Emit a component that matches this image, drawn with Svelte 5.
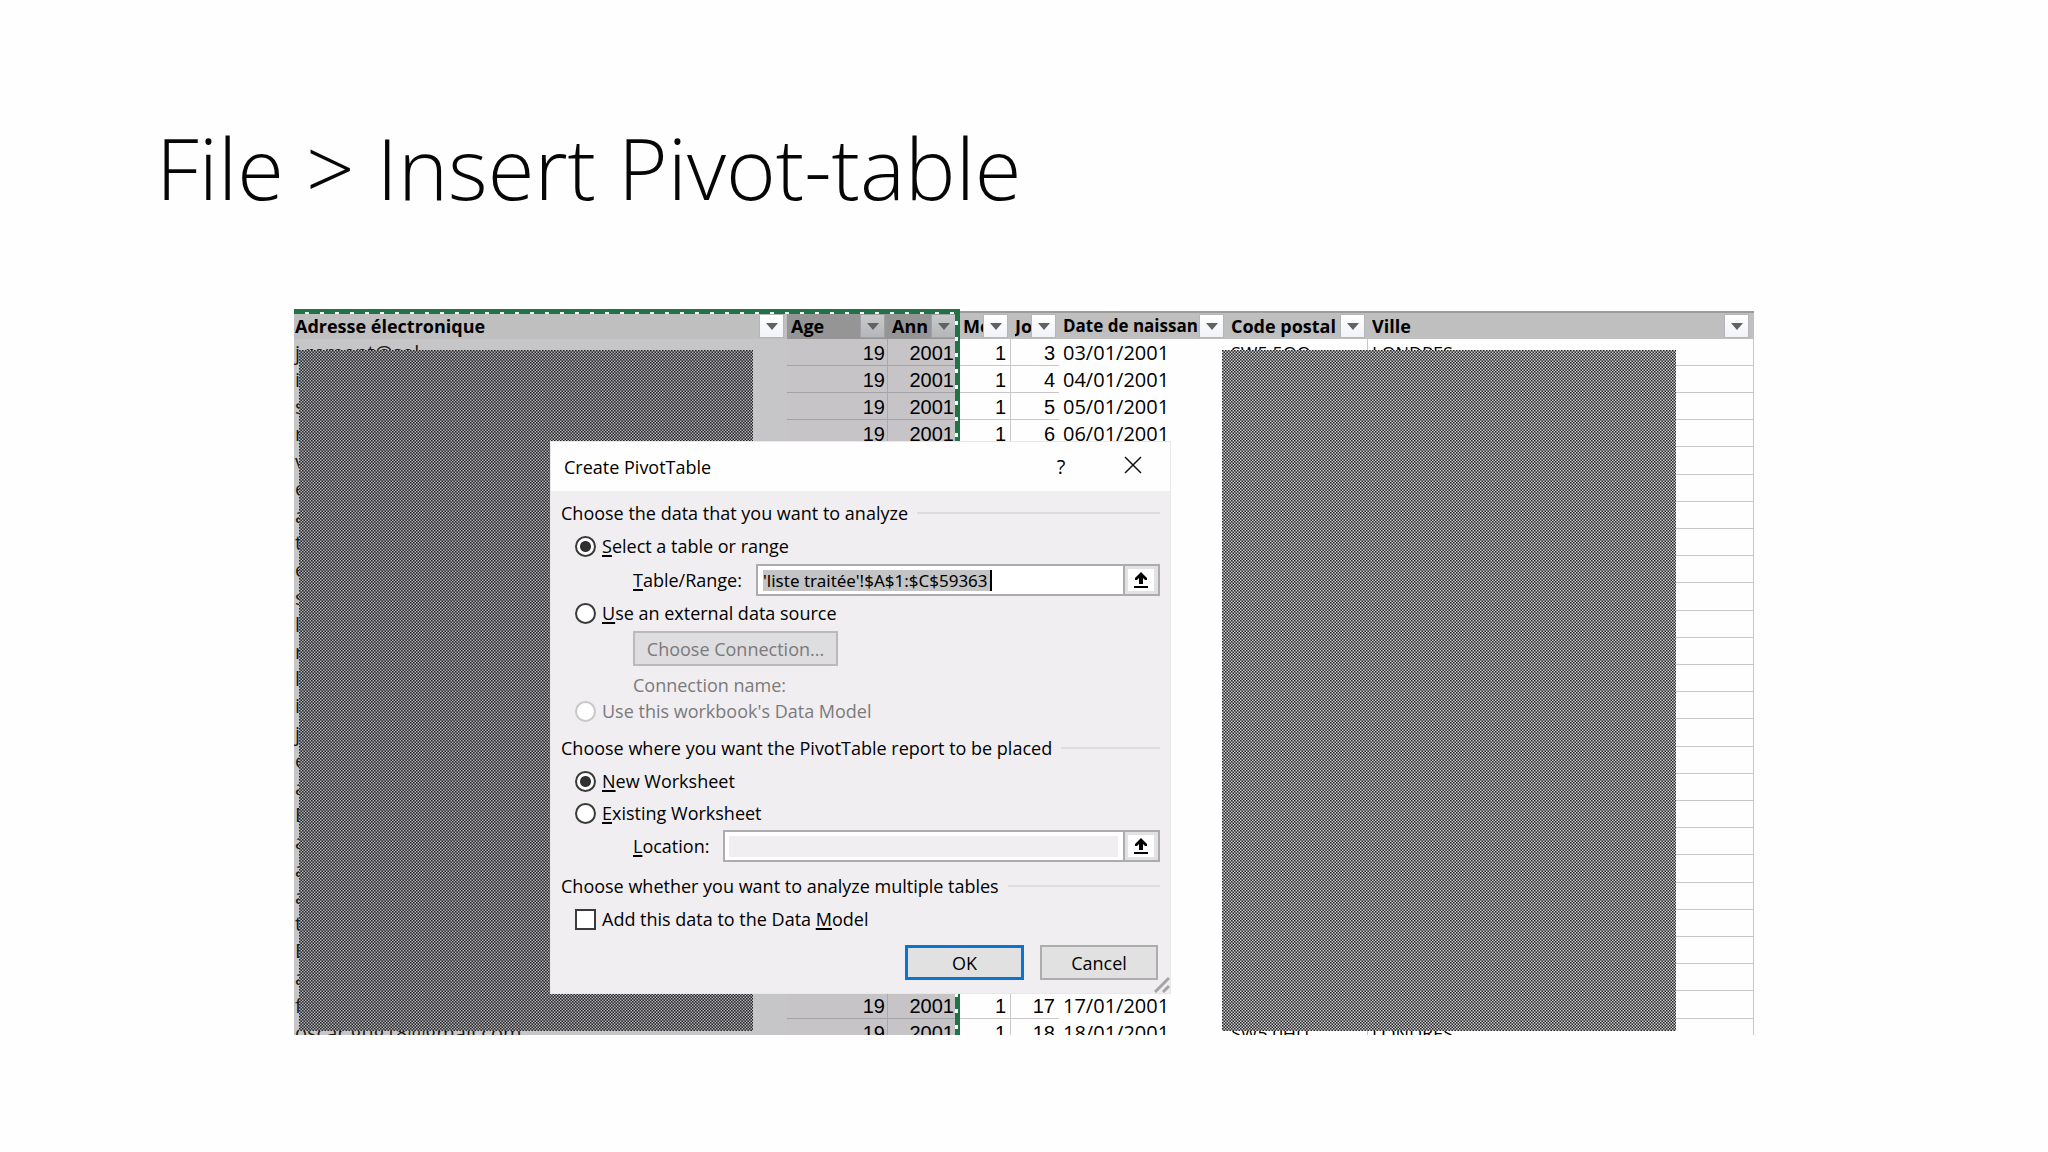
<script>
  const letters = ['j.remont@sol', 'i', 's', 'r', 'v', 'e', 'a', 't', 'e', 's', 'l', 'r', 'l', 'i', 'j', 'e', 'a', 'E', 'a', 'a', 'a', 't', 'E', 'a', 'f', 'oscar.gug18@gmail.com'];
  const days = { 0: 3, 1: 4, 2: 5, 3: 6, 24: 17, 25: 18 };
  const postal = { 0: ['SW5 5QQ', 'LONDRES'], 25: ['SW5 0HU', 'LONDRES'] };
  const rows = letters.map((mail, i) => ({
    mail,
    shown: i in days,
    day: days[i] ?? '',
    date: i in days ? String(days[i]).padStart(2, '0') + '/01/2001' : '',
    code: postal[i]?.[0] ?? '',
    town: postal[i]?.[1] ?? ''
  }));
  const columns = ['Adresse électronique', 'Age', 'Ann', 'Mois', 'Jo', 'Date de naissan', 'Code postal', 'Ville'];
  let source = $state('range');
  let place = $state('new');
  let range = $state("'liste traitée'!$A$1:$C$59363");
</script>

{#snippet hatch(id, dark, mid, light)}
  <svg class="hatch {id}" aria-hidden="true">
    <defs>
      <pattern id={id} width="3" height="3" patternUnits="userSpaceOnUse">
        <rect width="3" height="3" fill={mid} />
        <rect width="1" height="1" fill={dark} />
        <rect x="2" y="2" width="1" height="1" fill={dark} />
        <rect x="2" width="1" height="1" fill={light} />
        <rect y="2" width="1" height="1" fill={light} />
      </pattern>
    </defs>
    <rect width="100%" height="100%" fill="url(#{id})" />
  </svg>
{/snippet}

{#snippet picker(label)}
  <button class="picker" type="button" aria-label={label}>
    <svg width="14" height="16" viewBox="0 0 14 16"><path d="M7 0 13 6V8H11L9 6V12H5V6L3 8H1V6ZM0 14H14V16H0Z" /></svg>
  </button>
{/snippet}

<main>
  <h1>File &gt; Insert Pivot-table</h1>

  <section class="sheet">
    <table>
      <colgroup>
        {#each columns as _, i}<col class="c{i}" />{/each}
      </colgroup>
      <thead>
        <tr>
          {#each columns as name}
            <th scope="col">
              <div class="head">
                <span>{name}</span>
                <button class="filter" type="button" aria-label="Filter {name}">
                  <svg width="12" height="7" viewBox="0 0 12 7"><path d="M0 0H12L6 7Z" /></svg>
                </button>
              </div>
            </th>
          {/each}
        </tr>
      </thead>
      <tbody>
        {#each rows as r}
          <tr>
            <td>{r.mail}</td>
            <td>{r.shown ? 19 : ''}</td>
            <td>{r.shown ? 2001 : ''}</td>
            <td>{r.shown ? 1 : ''}</td>
            <td>{r.day}</td>
            <td>{r.date}</td>
            <td>{r.code}</td>
            <td>{r.town}</td>
          </tr>
        {/each}
      </tbody>
    </table>

    <div class="ants-top"></div>
    <div class="ants-right"></div>
    {@render hatch('left', '#262628', '#666669', '#b6b5b9')}
    {@render hatch('right', '#262627', '#757476', '#cfced0')}

    <form class="dialog" aria-label="Create PivotTable" onsubmit={(e) => e.preventDefault()}>
      <header>
        <h2>Create PivotTable</h2>
        <button type="button" class="bar-btn" aria-label="Help">?</button>
        <button type="button" class="bar-btn close" aria-label="Close">
          <svg width="18" height="18" viewBox="0 0 18 18"><path d="M1 1 17 17M17 1 1 17" /></svg>
        </button>
      </header>
      <div class="body">
        <h3 class="first">Choose the data that you want to analyze</h3>
        <label class="opt"><input type="radio" value="range" bind:group={source} /><span><u>S</u>elect a table or range</span></label>
        <div class="field">
          <label for="range"><u>T</u>able/Range:</label>
          <div class="box range"><input id="range" type="text" bind:value={range} />{@render picker('Pick range')}</div>
        </div>
        <label class="opt"><input type="radio" value="external" bind:group={source} /><span><u>U</u>se an external data source</span></label>
        <button class="push connect" type="button" disabled>Choose Connection...</button>
        <p>Connection name:</p>
        <label class="opt off"><input type="radio" value="model" bind:group={source} disabled /><span>Use this workbook's Data Model</span></label>

        <h3>Choose where you want the PivotTable report to be placed</h3>
        <label class="opt"><input type="radio" value="new" bind:group={place} /><span><u>N</u>ew Worksheet</span></label>
        <label class="opt tight"><input type="radio" value="existing" bind:group={place} /><span><u>E</u>xisting Worksheet</span></label>
        <div class="field loc">
          <label for="location"><u>L</u>ocation:</label>
          <div class="box location"><input id="location" type="text" />{@render picker('Pick location')}</div>
        </div>

        <h3>Choose whether you want to analyze multiple tables</h3>
        <label class="opt"><input type="checkbox" /><span>Add this data to the Data <u>M</u>odel</span></label>
        <div class="actions">
          <button class="push ok" type="submit">OK</button>
          <button class="push" type="button">Cancel</button>
        </div>
      </div>
      <svg class="grip" width="16" height="16" viewBox="0 0 16 16" aria-hidden="true"><path d="M1 15 15 1M9 15 15 9" /></svg>
    </form>
  </section>
</main>

<style>
  :global(body) { margin: 0; background: #fefefe; }
  * { box-sizing: border-box; }
  main { min-height: 100vh; color: #000; font-family: "Open Sans", "Noto Sans", sans-serif; font-size: 18px; }
  h1 { margin: 0; padding: 111px 156px 86px; font-size: 85px; line-height: 112px; font-weight: 300; color: #060606; }
  button, input { font: inherit; color: inherit; margin: 0; }
  button { padding: 0; }

  .sheet { position: relative; margin: 0 294px; height: 726px; overflow: hidden; padding-top: 2px; }
  table { width: 100%; border-collapse: separate; border-spacing: 0; table-layout: fixed; }
  .c0 { width: 493px; } .c1 { width: 101px; } .c2 { width: 71px; } .c3 { width: 52px; }
  .c4 { width: 48px; } .c5 { width: 168px; } .c6 { width: 141px; }
  th { height: 28px; padding: 0; background: #bfbfbf; border-top: 2px solid #9c9c9c; font-weight: 700; text-align: left; }
  th:nth-child(2), th:nth-child(3) { background: #959595; }
  th:nth-child(6) { font-size: 17px; }
  .head { display: flex; align-items: center; height: 26px; padding: 0 3px 0 1px; }
  .head span { flex: 1; min-width: 0; overflow: hidden; white-space: nowrap; line-height: 26px; }
  th:nth-child(n + 2) .head { padding-left: 4px; }
  th:last-child .head { padding-right: 5px; }
  .filter { flex: none; width: 25px; height: 24px; border: 1px solid #b4b6ba; background: linear-gradient(#fff, #f1f3f7); display: grid; place-items: center; }
  .filter path { fill: #626262; }
  th:nth-child(2) .filter, th:nth-child(3) .filter { background: linear-gradient(#c9c9cb, #b4b6b9); border-color: #9fa1a5; }
  td { height: 27px; padding: 2px 4px 0; line-height: 24px; white-space: nowrap; overflow: hidden; border-bottom: 1px solid #c9c7ca; background: #fefefe; }
  tr:nth-child(5n) td { height: 28px; }
  td:nth-child(1) { background: #c6c5c8; border-color: #c6c5c8; padding-left: 1px; color: #20180f; font-size: 20px; }
  td:nth-child(2), td:nth-child(3) { background: #c6c4c7; border-color: #a3a2a5; }
  td:nth-child(n + 2):nth-child(-n + 5) { font-family: "Liberation Sans", Arial, sans-serif; font-size: 20px; text-align: right; }
  td:nth-child(2) { border-right: 1px solid #a9a8ab; padding-right: 2px; }
  td:nth-child(3) { padding-right: 5px; }
  td:nth-child(4) { border-right: 1px solid #c9c7ca; }
  td:nth-child(6), td:nth-child(7) { border-bottom-color: #fefefe; }
  td:nth-child(6) { font-size: 20px; }
  td:nth-child(7), td:nth-child(8) { border-right: 1px solid #c9c7ca; }

  .ants-top { position: absolute; left: 0; top: 0; width: 666px; height: 5px; background: repeating-linear-gradient(90deg, transparent 0 11px, #fff 11px 15px) 0 100% / 100% 2px no-repeat, #217346; }
  .ants-right { position: absolute; left: 661px; top: 0; width: 5px; bottom: 0; background: repeating-linear-gradient(transparent 0 12px, #fff 12px 16px) 0 0 / 3px 100% no-repeat, #217346; }
  .hatch { position: absolute; top: 41px; height: 681px; }
  .hatch.left { left: 5px; width: 454px; }
  .hatch.right { left: 928px; width: calc(100% - 1006px); }

  .dialog { position: absolute; left: 257px; top: 133px; width: 619px; background: #f0eef0; outline: 1px solid #e9e7ea; }
  header { display: flex; align-items: center; height: 49px; padding: 0 13px; background: #fefefe; }
  h2 { flex: 1; margin: 0; font-size: 18px; line-height: 24px; font-weight: 400; }
  .bar-btn { width: 48px; height: 40px; border: 0; background: none; font-size: 20px; line-height: 24px; }
  .bar-btn.close { width: 48px; margin-left: 24px; }
  .close path { fill: none; stroke: #111; stroke-width: 1.5; }
  .body { display: flex; flex-direction: column; padding: 6px 10px 13px; }
  h3 { display: flex; align-items: center; gap: 9px; margin: 8px 0 0; height: 32px; font-size: 18px; font-weight: 400; white-space: nowrap; }
  h3.first { margin-top: 0; }
  h3::after { content: ""; flex: 1; height: 2px; background: #dcdbdd; }
  .opt { display: flex; align-items: center; gap: 6px; height: 32px; margin-top: 1px; padding-left: 14px; align-self: flex-start; }
  .opt.tight { margin-top: 0; }
  .opt.off { height: 26px; margin-top: 0; color: #7b7a7c; }
  u { text-decoration-thickness: 2px; text-underline-offset: 2px; }
  .opt input { appearance: none; flex: none; width: 21px; height: 21px; border: 2px solid #3a3a3a; background: #fff; }
  .opt input[type="radio"] { border-radius: 50%; }
  .opt input[type="radio"]:checked { background: radial-gradient(circle, #303030 0 5px, #fff 6px); }
  .opt input:disabled { border-color: #c8c7c9; }
  .field { display: flex; align-items: center; justify-content: space-between; height: 32px; margin-top: 2px; padding-left: 72px; }
  .field.loc { margin-top: 1px; }
  .box { display: flex; height: 32px; border: 2px solid #acabad; background: #fff; }
  .box.range { width: 404px; }
  .box.location { width: 437px; }
  .box input { flex: 1; min-width: 0; border: 0; outline: 0; padding: 0 5px; background: none; font-family: "Noto Sans", "Open Sans", sans-serif; font-size: 17px; }
  .range input { background: linear-gradient(90deg, #c4c4c4 0 227px, #000 227px 229px) 5px 4px / 229px 21px no-repeat; }
  .location input { background: #f0eef0; margin: 4px 7px 3px 4px; }
  .picker { flex: none; width: 33px; border: 3px solid #e2e1e3; border-right-width: 4px; outline: 2px solid #acabad; background: #fff; display: grid; place-items: center; }
  .push { height: 35px; width: 118px; border: 2px solid #adacae; background: #e1e1e1; }
  .push.ok { width: 119px; border: 3px solid #0a74d0; }
  .push.connect { width: 205px; margin: 2px 0 0 72px; color: #7b7a7c; background: #dedddf; border-color: #bab9bb; }
  p { margin: 6px 0 0 72px; line-height: 26px; color: #7b7a7c; }
  .actions { display: flex; justify-content: flex-end; gap: 16px; margin-top: 10px; padding-right: 2px; }
  .grip { position: absolute; right: 0; bottom: 0; }
  .grip path { fill: none; stroke: #a5a4a6; stroke-width: 3; }
</style>
